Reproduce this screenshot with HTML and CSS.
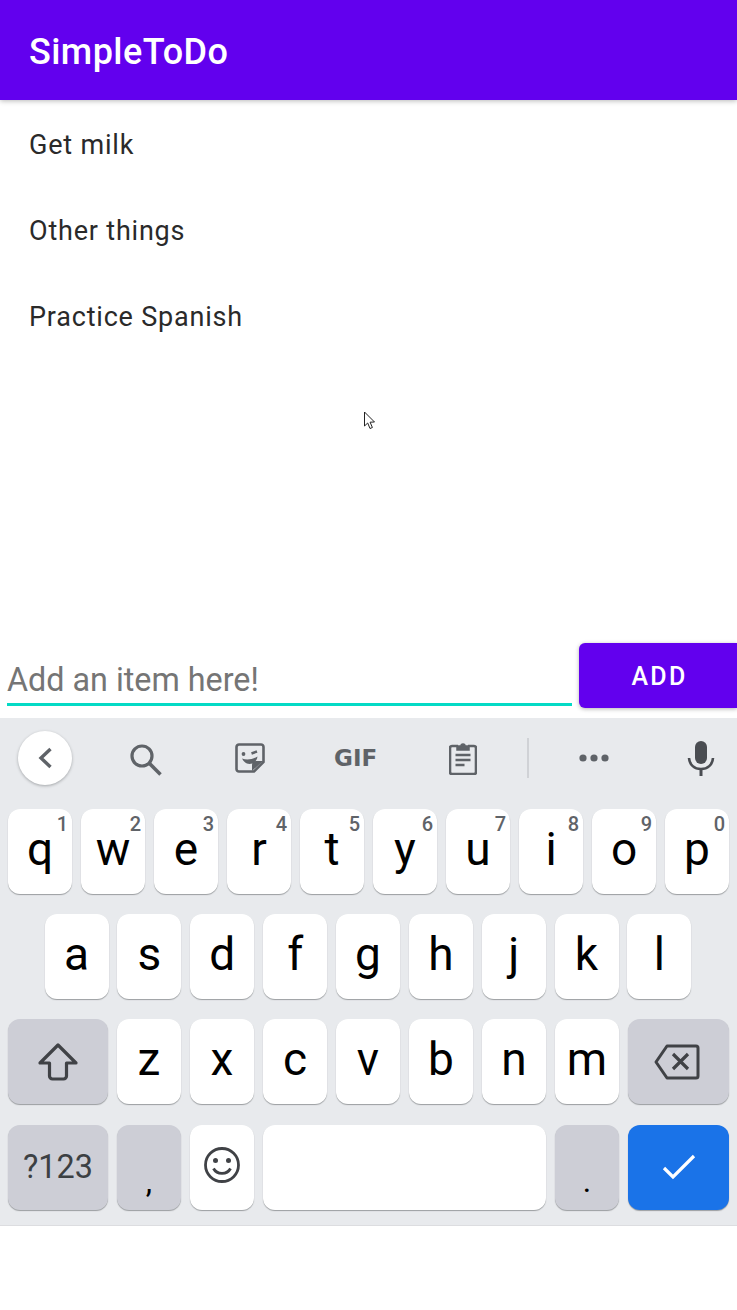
FILE: index.html
```html
<!DOCTYPE html>
<html lang="en">
<head>
  <meta charset="UTF-8">
  <title>SimpleToDo</title>
  <link rel="stylesheet" href="styles.css">
</head>
<body>
  <div class="app">
    <header class="toolbar">SimpleToDo</header>
    <ul class="todo-list">
      <li>Get milk</li>
      <li>Other things</li>
      <li>Practice Spanish</li>
    </ul>
    <div class="add-row">
      <div class="add-input">Add an item here!</div>
      <div class="add-btn">ADD</div>
    </div>
  </div>

  <!-- pointer from the screen recording -->
  <svg class="pointer" width="14" height="20" viewBox="0 0 14 20">
    <path d="M1.5 1v14l3.2-3 2.3 5.5 2.4-1-2.3-5.3 4.4-.2z" fill="#fff" stroke="#222" stroke-width="1"/>
  </svg>

  <div class="keyboard">
    <div class="kb-tools">
      <div class="kb-back">
        <svg width="18" height="24" viewBox="0 0 18 24"><path d="M14.500 3 5 12l9.500 9" fill="none" stroke="#5f6368" stroke-width="3.400"/></svg>
      </div>
      <svg class="tool tool-search" width="33" height="33" viewBox="0 0 33 33"><circle cx="13" cy="13" r="10" fill="none" stroke="#5f6368" stroke-width="3.200"/><path d="m20 20 11.500 11.500" stroke="#5f6368" stroke-width="3.600"/></svg>
      <svg class="tool tool-sticker" width="30" height="30" viewBox="0 0 30 30"><path d="M4 1.500h22a2.500 2.500 0 0 1 2.500 2.500v15L19 28.500H4A2.500 2.500 0 0 1 1.500 26V4A2.500 2.500 0 0 1 4 1.500z" fill="none" stroke="#5f6368" stroke-width="2.600"/><path d="M28 18h-7a4 4 0 0 0-4 4v6z" fill="#5f6368"/><circle cx="8.500" cy="11" r="1.900" fill="#5f6368"/><path d="M16.500 10.500l5.500-2" stroke="#5f6368" stroke-width="2.400"/><path d="M7 15.500c5 2 10 1 15.500-2-.5 4.500-4 7.500-8 7.500-3 0-6-2-7.500-5.500z" fill="#5f6368"/></svg>
      <span class="tool tool-gif">GIF</span>
      <svg class="tool tool-clip" width="28" height="34" viewBox="0 0 28 34"><path d="M9 5H3a2 2 0 0 0-2 2v24a2 2 0 0 0 2 2h22a2 2 0 0 0 2-2V7a2 2 0 0 0-2-2h-6" fill="none" stroke="#5f6368" stroke-width="2.600"/><path d="M8 9V5h4a2 2 0 0 1 4 0h4v4z" fill="#5f6368" stroke="#5f6368" stroke-width="1.500"/><path d="M6.500 14h15M6.500 19h15M6.500 24h9" stroke="#5f6368" stroke-width="2.600"/></svg>
      <span class="tool-sep"></span>
      <svg class="tool tool-more" width="32" height="10" viewBox="0 0 32 10"><circle cx="5" cy="5" r="3.600" fill="#5f6368"/><circle cx="16" cy="5" r="3.600" fill="#5f6368"/><circle cx="27" cy="5" r="3.600" fill="#5f6368"/></svg>
      <svg class="tool tool-mic" width="28" height="36" viewBox="0 0 28 36"><rect x="8" y="1" width="12" height="23" rx="6" fill="#4a4d52"/><path d="M2 18c.5 7 5.500 11 12 11s11.500-4 12-11" fill="none" stroke="#4a4d52" stroke-width="2.600"/><path d="M14 28v8" stroke="#4a4d52" stroke-width="3"/></svg>
    </div>

    <div class="kb-row">
      <div class="key"><sup>1</sup>q</div>
      <div class="key"><sup>2</sup>w</div>
      <div class="key"><sup>3</sup>e</div>
      <div class="key"><sup>4</sup>r</div>
      <div class="key"><sup>5</sup>t</div>
      <div class="key"><sup>6</sup>y</div>
      <div class="key"><sup>7</sup>u</div>
      <div class="key"><sup>8</sup>i</div>
      <div class="key"><sup>9</sup>o</div>
      <div class="key"><sup>0</sup>p</div>
    </div>
    <div class="kb-row kb-row-mid">
      <div class="key">a</div>
      <div class="key">s</div>
      <div class="key">d</div>
      <div class="key">f</div>
      <div class="key">g</div>
      <div class="key">h</div>
      <div class="key">j</div>
      <div class="key">k</div>
      <div class="key">l</div>
    </div>
    <div class="kb-row">
      <div class="key key-wide key-dark">
        <svg width="42" height="40" viewBox="0 0 42 40"><path d="M21 3 3 21h9.500v13a3 3 0 0 0 3 3h11a3 3 0 0 0 3-3V21H39z" fill="none" stroke="#404246" stroke-width="3.200" stroke-linejoin="round"/></svg>
      </div>
      <div class="key">z</div>
      <div class="key">x</div>
      <div class="key">c</div>
      <div class="key">v</div>
      <div class="key">b</div>
      <div class="key">n</div>
      <div class="key">m</div>
      <div class="key key-wide key-dark">
        <svg class="icon-del" width="46" height="36" viewBox="0 0 46 36"><path d="M13 2h29a2 2 0 0 1 2 2v28a2 2 0 0 1-2 2H13L2 18z" fill="none" stroke="#404246" stroke-width="3" stroke-linejoin="round"/><path d="m19 10 15 15m0-15L19 25" stroke="#404246" stroke-width="3.200"/></svg>
      </div>
    </div>
    <div class="kb-row">
      <div class="key key-wide key-dark key-sym">?123</div>
      <div class="key key-dark key-punct">,</div>
      <div class="key">
        <svg width="38" height="38" viewBox="0 0 38 38"><circle cx="19" cy="19" r="16.500" fill="none" stroke="#404246" stroke-width="2.800"/><circle cx="12.500" cy="14.500" r="2.500" fill="#404246"/><circle cx="25.500" cy="14.500" r="2.500" fill="#404246"/><path d="M10.500 22.500c3.500 6.500 13.500 6.500 17 0" fill="none" stroke="#404246" stroke-width="2.800"/></svg>
      </div>
      <div class="key key-space"></div>
      <div class="key key-dark key-punct">.</div>
      <div class="key key-wide key-enter">
        <svg width="34" height="26" viewBox="0 0 34 26"><path d="m2 14 9 9L32 2" fill="none" stroke="#fff" stroke-width="3.200"/></svg>
      </div>
    </div>
  </div>
</body>
</html>
```

FILE: styles.css
```css
* {
  box-sizing: border-box;
}
html, body {
  margin: 0;
  height: 100%;
  background: #fff;
}
body {
  position: relative;
  font-family: Roboto, "Liberation Sans", sans-serif;
  overflow: hidden;
}

.app {
  display: flex;
  flex-direction: column;
  height: 718px;
}
.toolbar {
  height: 100px;
  padding-left: 29px;
  line-height: 105px;
  font-size: 36px;
  font-weight: 500;
  letter-spacing: .45px;
  color: #fff;
  background: #6200ee;
  box-shadow: 0 1px 5px rgba(0, 0, 0, .28);
}
.todo-list {
  flex: 1;
  margin: 0;
  padding: 2px 0 0;
  list-style: none;
}
.todo-list li {
  height: 86px;
  padding-left: 29px;
  line-height: 86px;
  font-size: 27px;
  letter-spacing: .8px;
  color: #2a2a2a;
}

.add-row {
  display: flex;
  gap: 7px;
  padding: 0 0 10px 7px;
}
.add-input {
  flex: 1;
  height: 63px;
  padding-top: 17px;
  font-size: 32.300px;
  line-height: 40px;
  color: #757575;
  border-bottom: 3px solid #03dac5;
}
.add-btn {
  width: 158px;
  height: 65px;
  padding-left: 3px;
  line-height: 67px;
  text-align: center;
  font-size: 25px;
  font-weight: 500;
  letter-spacing: 2.200px;
  color: #fff;
  background: #6200ee;
  border-radius: 6px 0 0 6px;
  box-shadow: 0 1px 4px rgba(0, 0, 0, .3);
}

.pointer {
  position: absolute;
  left: 363px;
  top: 411px;
}

.keyboard {
  height: 508px;
  padding: 0 8px;
  background: #e8eaed;
  border-bottom: 1px solid #dcdde0;
}
.kb-tools {
  position: relative;
  height: 91px;
}
.kb-back {
  position: absolute;
  left: 10px;
  top: 13px;
  width: 54px;
  height: 54px;
  display: flex;
  align-items: center;
  justify-content: center;
  background: #fff;
  border-radius: 50%;
  box-shadow: 0 1px 3px rgba(60, 64, 67, .4);
}
/* toolbar icons sit at irregular spots, same as the keyboard app */
.tool {
  position: absolute;
}
.tool-search { left: 121px; top: 25px; }
.tool-sticker { left: 227px; top: 25px; }
.tool-gif {
  left: 326px;
  top: 24px;
  font-family: "DejaVu Sans", sans-serif;
  font-size: 23px;
  line-height: 32px;
  font-weight: 700;
  color: #5f6368;
}
.tool-clip { left: 441px; top: 23px; }
.tool-sep {
  position: absolute;
  left: 519px;
  top: 20px;
  width: 2px;
  height: 40px;
  background: #d0d2d6;
}
.tool-more { left: 570px; top: 35px; }
.tool-mic { left: 679px; top: 22px; }

.kb-row {
  display: flex;
  gap: 9px;
  height: 85px;
  margin-bottom: 20.200px;
}
.kb-row-mid {
  gap: 8.850px;
  padding-left: 36.600px;
}
.key {
  position: relative;
  flex: 0 0 64px;
  display: flex;
  align-items: center;
  justify-content: center;
  padding-bottom: 5px;
  font-size: 46px;
  color: #000;
  background: #fff;
  border-radius: 12px;
  box-shadow: 0 1px 1px rgba(60, 64, 67, .45);
}
.key sup {
  position: absolute;
  top: 4px;
  right: 4px;
  font-size: 20px;
  line-height: 22px;
  font-weight: 500;
  color: #5f6368;
}
.key-wide {
  flex-basis: 100px;
  padding-bottom: 0;
}
.key-wide:last-child {
  flex-basis: 101px;
}
.key-dark {
  background: #cdced6;
}
.key-sym {
  font-size: 32.400px;
  color: #3c4043;
}
.key-punct {
  font-size: 32px;
  padding: 28px 0 0;
}
.key-space {
  flex: 1;
}
.key-enter {
  background: #1a73e8;
}
.icon-del {
  margin-left: -3px;
}
```
